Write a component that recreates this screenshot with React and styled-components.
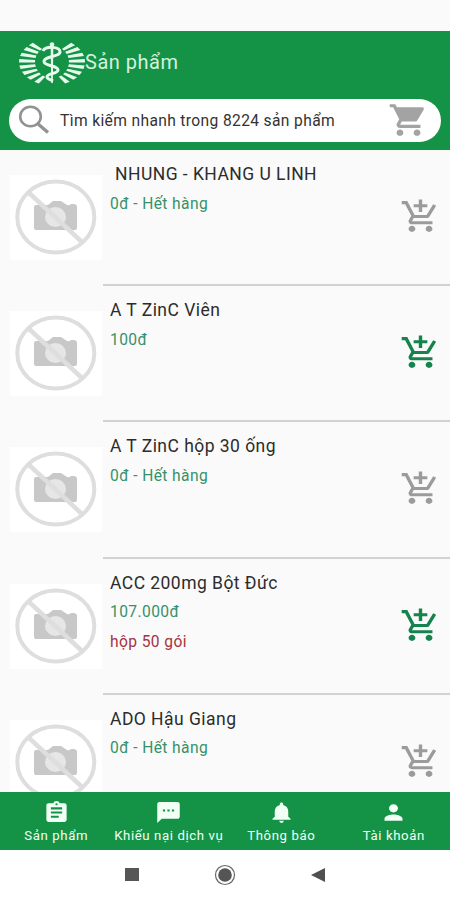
import React from 'react';
import styled, { createGlobalStyle } from 'styled-components';
import { MdShoppingCart, MdOutlineAddShoppingCart, MdAssignment, MdTextsms, MdNotifications, MdPerson } from 'react-icons/md';

const GlobalStyle = createGlobalStyle`
  *, *::before, *::after { box-sizing: border-box; }
  body { margin: 0; background: #fff; font-family: Roboto, "Liberation Sans", sans-serif; }
`;

const Screen = styled.div`
  display: flex;
  flex-direction: column;
  width: 450px;
  height: 900px;
  overflow: hidden;
  background: #fff;
`;

const StatusBar = styled.div`
  flex: none;
  height: 31px;
  background: #fafafa;
`;

const Header = styled.header`
  flex: none;
  height: 119px;
  padding-top: 7px;
  background: #149347;
`;

const TitleRow = styled.div`
  display: flex;
  align-items: center;
  height: 48px;
  padding-left: 18px;
`;

const Title = styled.h1`
  margin: 0 0 0 -1px;
  font-size: 20px;
  line-height: 24px;
  font-weight: 400;
  letter-spacing: 0.5px;
  color: #d6f1de;
  white-space: nowrap;
`;

const SearchBar = styled.div`
  display: flex;
  align-items: center;
  height: 43px;
  margin: 13px 9px 0;
  padding: 0 12px 0 9px;
  border-radius: 22px;
  background: #fff;
`;

const SearchText = styled.span`
  flex: 1;
  margin-left: 10px;
  font-size: 15.6px;
  letter-spacing: 0.36px;
  color: #333;
  white-space: nowrap;
`;

const BasketIcon = styled(MdShoppingCart)`
  flex: none;
  width: 41px;
  height: 38px;
  margin-top: -1px;
  color: #a3a3a3;
`;

const ProductList = styled.main`
  flex: none;
  height: 642px;
  overflow: hidden;
  background: #fafafa;
`;

const ProductRow = styled.article`
  display: flex;
  height: 136.2px;
`;

const Thumb = styled.div`
  flex: none;
  width: 92px;
  height: 85px;
  margin: 25px 1px 0 10px;
  background: #fff;
`;

const RowBody = styled.div`
  flex: 1;
  display: flex;
  border-bottom: 2px solid #d2d2d2;
`;

const Details = styled.div`
  flex: 1;
  padding: 10px 0 0 7px;
`;

const Name = styled.div`
  height: 29.5px;
  padding-left: ${(p) => p.$indent || 0}px;
  font-size: 17.5px;
  line-height: 28px;
  letter-spacing: 0.46px;
  color: #2c2c2c;
  white-space: nowrap;
`;

const Price = styled.div`
  height: 30px;
  font-size: 15.6px;
  line-height: 29px;
  letter-spacing: 0.4px;
  color: ${(p) => (p.$note ? '#a5333f' : '#37906a')};
  white-space: nowrap;
`;

const CartButton = styled.button`
  flex: none;
  align-self: flex-start;
  display: flex;
  margin: 48px 9px 0 0;
  padding: 0;
  border: 0;
  background: none;
  color: ${(p) => (p.$active ? '#14834c' : '#9b9b9b')};
`;

const AddIcon = styled(MdOutlineAddShoppingCart)`
  width: 41px;
  height: 37px;
`;

const TabBar = styled.nav`
  flex: none;
  display: grid;
  grid-template-columns: repeat(4, 1fr);
  height: 58px;
  background: #149347;
`;

const Tab = styled.div`
  display: flex;
  flex-direction: column;
  align-items: center;
  padding-top: 8px;
  color: #f1fff5;

  svg {
    width: 27px;
    height: 25px;
  }
`;

const TabLabel = styled.span`
  margin-top: 1px;
  font-size: 13.2px;
  line-height: 19px;
  letter-spacing: 0.6px;
  white-space: nowrap;
`;

const SystemBar = styled.footer`
  flex: 1;
  display: flex;
  justify-content: center;
  align-items: center;
  gap: 75px;
  padding-left: 1px;
`;

const rays = [-50, -35, -19, -3, 13, 29, 45, 62];

const Logo = () => (
  <svg width="68" height="44" viewBox="0 0 68 44" fill="#e6fbec">
    {[1, -1].map((side) => (
      <g key={side} transform={`translate(34 22) scale(${side} 1)`}>
        {rays.map((a) => {
          const point = (rx, ry, offset) => {
            const r = ((a + offset) * Math.PI) / 180;
            return `${(rx * Math.cos(r)).toFixed(2)},${(ry * Math.sin(r)).toFixed(2)}`;
          };
          return <polygon key={a} points={[point(17, 16, -4.5), point(33, 23.5, -4.5), point(33, 23.5, 4.5), point(17, 16, 4.5)].join(' ')} />;
        })}
      </g>
    ))}
    <path d="M32.600 3h2.800l-.6 40h-1.600z" />
    <circle cx="34" cy="4.500" r="2.300" />
    <path d="M25 11c2-5 17-5 17 1c0 5-16 4-16 9.500c0 5 14 3.500 14 8.500c0 4-11 3-11 7c0 2 3 2.500 6 4" fill="none" stroke="#e6fbec" strokeWidth="3" />
  </svg>
);

const SearchIcon = () => (
  <svg width="32" height="31" viewBox="0 0 32 31" fill="none" stroke="#929292">
    <ellipse cx="12.500" cy="11.500" rx="10.300" ry="9.800" strokeWidth="2.600" />
    <path d="M19.500 18.500L30 27.500" strokeWidth="3.400" />
  </svg>
);

const NoPhoto = () => (
  <svg width="92" height="85" viewBox="0 0 92 85" fill="none">
    <path fill="#c8c8c8" d="M26 30h12l5-4h8l6 4q2 1 4-1h3q2 0 3 2V53q0 2-2 2H26q-2 0-2-2V32q0-2 2-2z" />
    <ellipse cx="45.500" cy="42" rx="10.500" ry="10" fill="#e6e6e6" />
    <ellipse cx="45.800" cy="42" rx="38.500" ry="35.500" stroke="#dedede" strokeWidth="4" />
    <path d="M18 17L72 67" stroke="#dedede" strokeWidth="4.500" />
  </svg>
);

const products = [
  { name: 'NHUNG - KHANG U LINH', indent: 5, price: '0đ - Hết hàng' },
  { name: 'A T ZinC Viên', price: '100đ', active: true },
  { name: 'A T ZinC hộp 30 ống', price: '0đ - Hết hàng' },
  { name: 'ACC 200mg Bột Đức', price: '107.000đ', note: 'hộp 50 gói', active: true },
  { name: 'ADO Hậu Giang', price: '0đ - Hết hàng' },
];

const tabs = [
  { label: 'Sản phẩm', Icon: MdAssignment },
  { label: 'Khiếu nại dịch vụ', Icon: MdTextsms },
  { label: 'Thông báo', Icon: MdNotifications },
  { label: 'Tài khoản', Icon: MdPerson },
];

export default function App() {
  return (
    <>
      <GlobalStyle />
      <Screen>
        <StatusBar />
        <Header>
          <TitleRow>
            <Logo />
            <Title>Sản phẩm</Title>
          </TitleRow>
          <SearchBar>
            <SearchIcon />
            <SearchText>Tìm kiếm nhanh trong 8224 sản phẩm</SearchText>
            <BasketIcon preserveAspectRatio="none" />
          </SearchBar>
        </Header>
        <ProductList>
          {products.map((p) => (
            <ProductRow key={p.name}>
              <Thumb><NoPhoto /></Thumb>
              <RowBody>
                <Details>
                  <Name $indent={p.indent}>{p.name}</Name>
                  <Price>{p.price}</Price>
                  {p.note && <Price $note>{p.note}</Price>}
                </Details>
                <CartButton $active={p.active}>
                  <AddIcon preserveAspectRatio="none" />
                </CartButton>
              </RowBody>
            </ProductRow>
          ))}
        </ProductList>
        <TabBar>
          {tabs.map(({ label, Icon }) => (
            <Tab key={label}>
              <Icon preserveAspectRatio="none" />
              <TabLabel>{label}</TabLabel>
            </Tab>
          ))}
        </TabBar>
        <SystemBar>
          <svg width="14" height="14"><rect width="14" height="13" fill="#565656" /></svg>
          <svg width="22" height="22"><circle cx="11" cy="11" r="9.500" fill="none" stroke="#666" strokeWidth="1.200" /><circle cx="11" cy="11" r="6.800" fill="#555" /></svg>
          <svg width="15" height="14"><path d="M0 7L14 0V14z" fill="#505050" /></svg>
        </SystemBar>
      </Screen>
    </>
  );
}
